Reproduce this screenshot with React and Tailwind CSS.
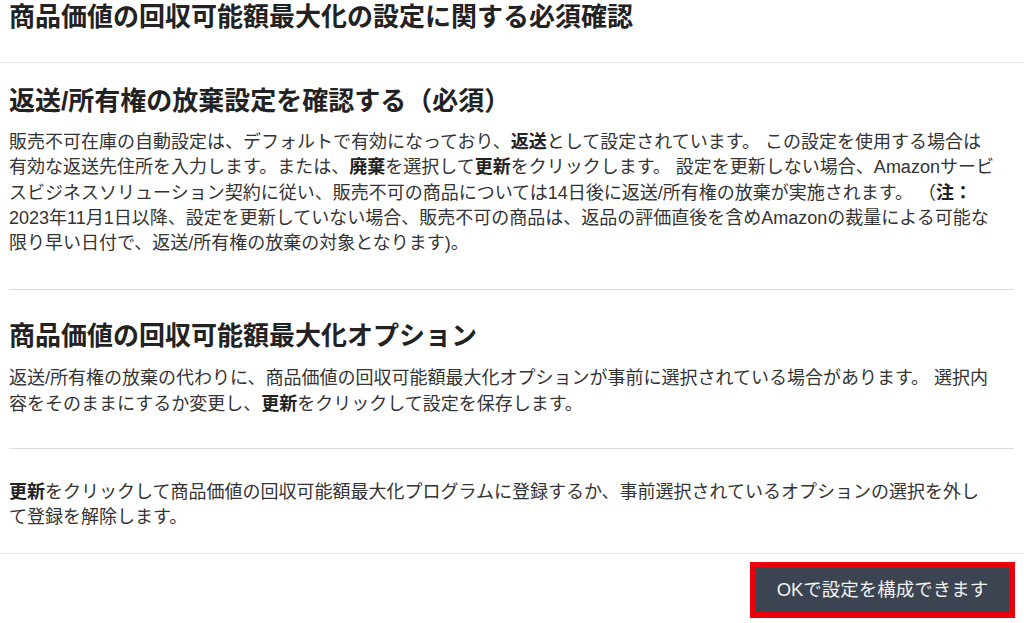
export default function App() {
  const font = { fontFamily: '"Liberation Sans", "Noto Sans CJK JP", sans-serif' };

  return (
    <div
      className="w-[1024px] h-[623px] overflow-hidden bg-white text-[#333]"
      style={font}
    >
      {/* Modal header */}
      <div className="h-[63px] border-b border-[#e6e6e6] px-[9px]">
        <h1 className="text-[26px] leading-[34px] font-bold text-[#222] whitespace-nowrap">
          商品価値の回収可能額最大化の設定に関する必須確認
        </h1>
      </div>

      {/* Body */}
      <div className="pl-[9px] pr-[10px]">
        <section className="pt-[21px] pb-[33px] border-b border-[#dcdcdc]">
          <h2 className="text-[26px] leading-[34px] font-bold text-[#222] whitespace-nowrap">
            返送/所有権の放棄設定を確認する（必須）
          </h2>
          <p className="mt-[12px] text-[18px] leading-[25.3px] whitespace-nowrap">
            販売不可在庫の自動設定は、デフォルトで有効になっており、<b className="text-[#222]">返送</b>として設定されています。 この設定を使用する場合は
            <br />
            有効な返送先住所を入力します。または、<b className="text-[#222]">廃棄</b>を選択して<b className="text-[#222]">更新</b>をクリックします。 設定を更新しない場合、Amazonサービ
            <br />
            スビジネスソリューション契約に従い、販売不可の商品については14日後に返送/所有権の放棄が実施されます。 （<b className="text-[#222]">注：</b>
            <br />
            2023年11月1日以降、設定を更新していない場合、販売不可の商品は、返品の評価直後を含めAmazonの裁量による可能な
            <br />
            限り早い日付で、返送/所有権の放棄の対象となります)。
          </p>
        </section>

        <section className="pt-[29px] pb-[31px] border-b border-[#dcdcdc]">
          <h2 className="text-[26px] leading-[34px] font-bold text-[#222] whitespace-nowrap">
            商品価値の回収可能額最大化オプション
          </h2>
          <p className="mt-[13px] text-[18px] leading-[25.3px] whitespace-nowrap">
            返送/所有権の放棄の代わりに、商品価値の回収可能額最大化オプションが事前に選択されている場合があります。 選択内
            <br />
            容をそのままにするか変更し、<b className="text-[#222]">更新</b>をクリックして設定を保存します。
          </p>
        </section>

        <section className="pt-[31px] pb-[22px]">
          <p className="text-[18px] leading-[25.3px] whitespace-nowrap">
            <b className="text-[#222]">更新</b>をクリックして商品価値の回収可能額最大化プログラムに登録するか、事前選択されているオプションの選択を外し
            <br />
            て登録を解除します。
          </p>
        </section>
      </div>

      {/* Footer */}
      <div className="border-t border-[#e6e6e6] flex justify-end pt-[8px] pr-[9px]">
        <div className="border-[6px] border-[#e8000b]">
          <button className="h-[44px] w-[253px] bg-[#3b4450] text-[#f2f2f2] text-[18.5px] flex items-center justify-center">
            OKで設定を構成できます
          </button>
        </div>
      </div>
    </div>
  );
}
